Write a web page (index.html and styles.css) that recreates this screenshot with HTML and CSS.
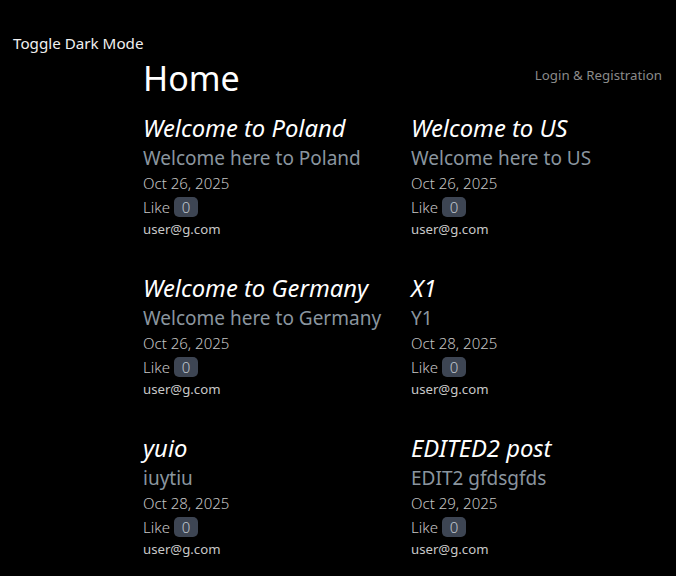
FILE: index.html
```html
<!DOCTYPE html>
<html>
<head>
<meta charset="utf-8">
<link rel="stylesheet" href="styles.css">
</head>
<body>
<div class="toggle">Toggle Dark Mode</div>
<div class="main">
  <div class="header">
    <h1 class="title">Home</h1>
    <a class="login">Login &amp; Registration</a>
  </div>
  <div class="grid">
    <div class="card">
      <div class="ct">Welcome to Poland</div>
      <div class="cs">Welcome here to Poland</div>
      <div class="cd">Oct 26, 2025</div>
      <div class="cl">Like <span class="badge">0</span></div>
      <div class="ce">user@g.com</div>
    </div>
    <div class="card">
      <div class="ct">Welcome to US</div>
      <div class="cs">Welcome here to US</div>
      <div class="cd">Oct 26, 2025</div>
      <div class="cl">Like <span class="badge">0</span></div>
      <div class="ce">user@g.com</div>
    </div>
    <div class="card">
      <div class="ct">Welcome to Germany</div>
      <div class="cs">Welcome here to Germany</div>
      <div class="cd">Oct 26, 2025</div>
      <div class="cl">Like <span class="badge">0</span></div>
      <div class="ce">user@g.com</div>
    </div>
    <div class="card">
      <div class="ct">X1</div>
      <div class="cs">Y1</div>
      <div class="cd">Oct 28, 2025</div>
      <div class="cl">Like <span class="badge">0</span></div>
      <div class="ce">user@g.com</div>
    </div>
    <div class="card">
      <div class="ct">yuio</div>
      <div class="cs">iuytiu</div>
      <div class="cd">Oct 28, 2025</div>
      <div class="cl">Like <span class="badge">0</span></div>
      <div class="ce">user@g.com</div>
    </div>
    <div class="card">
      <div class="ct">EDITED2 post</div>
      <div class="cs">EDIT2 gfdsgfds</div>
      <div class="cd">Oct 29, 2025</div>
      <div class="cl">Like <span class="badge">0</span></div>
      <div class="ce">user@g.com</div>
    </div>
  </div>
</div>
</body>
</html>
```
FILE: styles.css
```css
html, body {
  margin: 0;
  background: #000;
  color: #f2f2f2;
  font-family: "Noto Sans", "Open Sans", sans-serif;
}
.toggle {
  padding: 33px 0 0 13px;
  font-size: 15.2px;
  line-height: 20px;
  color: #f0f0f0;
}
.main {
  margin-left: 143px;
  padding-right: 14px;
}
.header {
  display: flex;
  justify-content: space-between;
  align-items: center;
  height: 48px;
  margin-top: 1px;
}
.title {
  margin: 0;
  font-weight: 400;
  font-size: 34px;
  line-height: 48px;
  color: #fff;
}
.login {
  font-size: 13.3px;
  color: #8a8a8a;
  margin-top: -6px;
}
.grid {
  display: grid;
  grid-template-columns: 268px 268px;
  grid-auto-rows: 160px;
  margin-top: 10px;
}
.card {
  display: flex;
  flex-direction: column;
}
.ct {
  font-style: italic;
  font-size: 23.8px;
  line-height: 32px;
  color: #fff;
}
.cs {
  font-size: 19px;
  line-height: 28px;
  color: #8a959f;
}
.cd {
  font-size: 15px;
  line-height: 23px;
  color: #c4c4c4;
  font-weight: 300;
}
.cl {
  font-size: 15px;
  line-height: 24px;
  color: #c8c8c8;
  font-weight: 300;
}
.badge {
  display: inline-block;
  background: #3d4553;
  color: #c0c8d0;
  border-radius: 5px;
  padding: 0 8px;
  line-height: 20px;
  font-size: 15px;
}
.ce {
  font-size: 13.2px;
  line-height: 20px;
  color: #c8c8c8;
}
```
